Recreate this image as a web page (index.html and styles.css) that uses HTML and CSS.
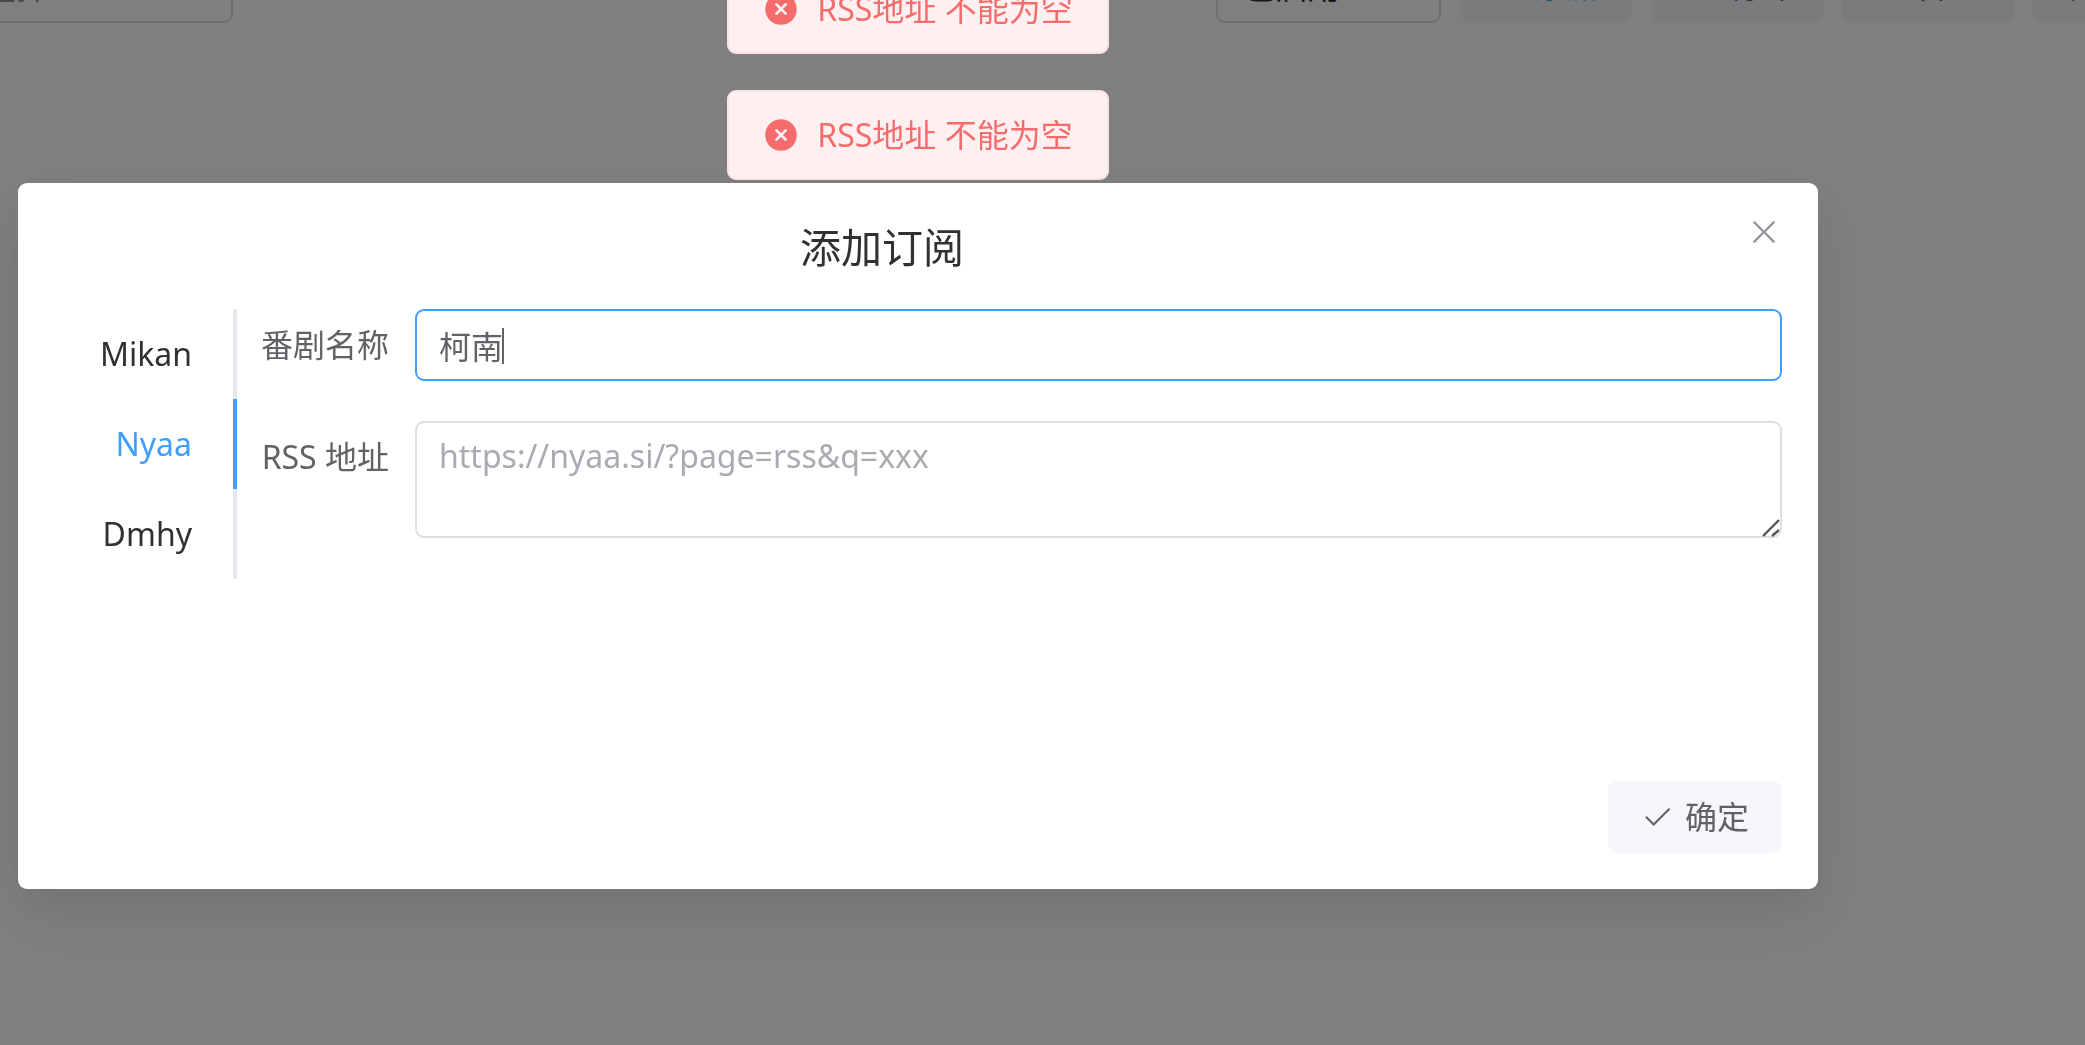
FILE: index.html
```html
<!DOCTYPE html>
<html lang="zh-CN">
<head>
<meta charset="utf-8">
<meta name="viewport" content="width=device-width, initial-scale=1">
<title>添加订阅</title>
<link rel="stylesheet" href="styles.css">
</head>
<body>
<div class="toolbar">
  <input class="toolbar-search" type="text" placeholder="请选择" aria-label="搜索">
  <div class="toolbar-actions">
    <select class="toolbar-filter" aria-label="状态"><option>已启用</option></select>
    <button class="btn btn-tool btn-primary" type="button"><span class="btn-icon"></span>添加</button>
    <button class="btn btn-tool" type="button"><span class="btn-icon"></span>刷新</button>
    <button class="btn btn-tool" type="button"><span class="btn-icon"></span>管理</button>
    <button class="btn btn-tool" type="button">日志</button>
  </div>
</div>

<div class="overlay">
  <section class="dialog" role="dialog" aria-labelledby="dialog-title">
    <header class="dialog-header">
      <h1 class="dialog-title" id="dialog-title">添加订阅</h1>
      <button class="dialog-close" type="button" aria-label="关闭">
        <svg viewBox="0 0 1024 1024" width="36" height="36"><path fill="currentColor" d="M764.288 214.592 512 466.88 259.712 214.592a31.936 31.936 0 0 0-45.12 45.12L466.752 512 214.528 764.224a31.936 31.936 0 1 0 45.12 45.184L512 557.184l252.288 252.288a31.936 31.936 0 0 0 45.12-45.12L557.12 512.064l252.288-252.352a31.936 31.936 0 1 0-45.12-45.184z"/></svg>
      </button>
    </header>
    <div class="dialog-body">
      <nav class="tabs">
        <a class="tab" href="#mikan">Mikan</a>
        <a class="tab active" href="#nyaa">Nyaa</a>
        <a class="tab" href="#dmhy">Dmhy</a>
      </nav>
      <form class="form" id="subscribe">
        <div class="form-item">
          <label class="form-label" for="name">番剧名称</label>
          <div class="field">
            <input class="control control-active" id="name" type="text" value="柯南">
            <span class="caret"></span>
          </div>
        </div>
        <div class="form-item">
          <label class="form-label" for="rss">RSS 地址</label>
          <div class="field">
            <textarea class="control control-area" id="rss" placeholder="https://nyaa.si/?page=rss&amp;q=xxx"></textarea>
            <svg class="grip" viewBox="0 0 20 20" width="20" height="20"><path d="M1 18 17 2M10 18l7-6" fill="none" stroke="#555" stroke-width="2.4"/></svg>
          </div>
        </div>
      </form>
    </div>
    <footer class="dialog-footer">
      <button class="btn" type="submit" form="subscribe">
        <svg viewBox="0 0 1024 1024" width="32" height="32"><path fill="currentColor" d="M406.656 706.944 195.84 496.256a32 32 0 1 0-45.248 45.248l256 256 512-512a32 32 0 0 0-45.248-45.248L406.592 706.944z"/></svg>
        确定
      </button>
    </footer>
  </section>
</div>

<div class="messages">
  <div class="message" role="alert">
    <svg viewBox="0 0 1024 1024" width="36" height="36"><path fill="currentColor" d="M512 64a448 448 0 1 1 0 896 448 448 0 0 1 0-896m0 393.664L407.936 353.6a38.4 38.4 0 1 0-54.336 54.336L457.664 512 353.6 616.064a38.4 38.4 0 1 0 54.336 54.336L512 566.336 616.064 670.4a38.4 38.4 0 1 0 54.336-54.336L566.336 512 670.4 407.936a38.4 38.4 0 1 0-54.336-54.336z"/></svg>
    <p class="message-text">RSS地址 不能为空</p>
  </div>
  <div class="message" role="alert">
    <svg viewBox="0 0 1024 1024" width="36" height="36"><path fill="currentColor" d="M512 64a448 448 0 1 1 0 896 448 448 0 0 1 0-896m0 393.664L407.936 353.6a38.4 38.4 0 1 0-54.336 54.336L457.664 512 353.6 616.064a38.4 38.4 0 1 0 54.336 54.336L512 566.336 616.064 670.4a38.4 38.4 0 1 0 54.336-54.336L566.336 512 670.4 407.936a38.4 38.4 0 1 0-54.336-54.336z"/></svg>
    <p class="message-text">RSS地址 不能为空</p>
  </div>
</div>
</body>
</html>
```
FILE: styles.css
```css
* { box-sizing: border-box; }

body {
  margin: 0;
  min-height: 100vh;
  overflow: hidden;
  background: #fff;
  color: #303133;
  font: 32px/36px "Noto Sans", "Noto Sans CJK SC", sans-serif;
}

button, input, select, textarea { font: inherit; }

/* Page toolbar, scrolled partly out of view */
.toolbar {
  display: flex;
  justify-content: space-between;
  margin-top: -50px;
  overflow: hidden;
}

.toolbar-search,
.toolbar-filter {
  height: 73px;
  padding: 0 26px;
  border: 2px solid #dcdfe6;
  border-radius: 9px;
  background: #fff;
  color: #303133;
  appearance: none;
}

.toolbar-search {
  width: 309px;
  margin-left: -76px;
}

.toolbar-search::placeholder { color: #909399; }

.toolbar-filter { width: 225px; }

.toolbar-actions {
  display: flex;
  flex: none;
  gap: 19px;
  margin-right: -120px;
}

.btn {
  display: flex;
  align-items: center;
  gap: 12px;
  height: 72px;
  padding: 0 33px;
  border: 0;
  border-radius: 9px;
  background: #f5f7fa;
  color: #606266;
}

.btn-tool { width: 172px; }
.btn-icon { width: 28px; }
.btn-primary { color: #409eff; }

/* Modal */
.overlay {
  position: fixed;
  inset: 0;
  padding: 183px 267px 0 18px;
  background: rgba(0, 0, 0, .5);
}

.dialog {
  display: flex;
  flex-direction: column;
  min-height: 706px;
  padding: 36px;
  border-radius: 9px;
  background: #fff;
  box-shadow: 0 27px 72px 9px rgba(0, 0, 0, .04), 0 18px 45px rgba(0, 0, 0, .08);
}

.dialog-header {
  position: relative;
  padding: 0 72px 34px 0;
}

.dialog-title {
  margin: 0;
  font-size: 41px;
  font-weight: 400;
  line-height: 56px;
  text-align: center;
}

.dialog-close {
  position: absolute;
  top: -5px;
  right: 0;
  display: flex;
  padding: 0;
  border: 0;
  background: none;
  color: #909399;
}

.dialog-body {
  display: flex;
  flex: 1;
  align-items: flex-start;
}

.tabs {
  width: 183px;
  flex: none;
}

.tab {
  display: block;
  padding-right: 41px;
  border-right: 4px solid #e4e7ed;
  color: #303133;
  line-height: 90px;
  text-align: right;
  text-decoration: none;
}

.tab.active {
  border-color: #409eff;
  color: #409eff;
}

.form {
  display: grid;
  flex: 1;
  gap: 40px;
}

.form-item { display: flex; }

.form-label {
  flex: none;
  width: 178px;
  padding-right: 26px;
  color: #606266;
  line-height: 72px;
  text-align: right;
}

.field {
  position: relative;
  display: flex;
  flex: 1;
}

.control {
  width: 100%;
  height: 72px;
  padding: 0 22px;
  border: 2px solid #dcdfe6;
  border-radius: 9px;
  outline: 0;
  background: #fff;
  color: #606266;
}

.control-active { border-color: #409eff; }

.control-area {
  height: 117px;
  padding: 9px 22px;
  line-height: 47px;
  resize: none;
}

.control-area::placeholder { color: #a8abb2; }

.caret {
  position: absolute;
  top: 19px;
  left: 87px;
  width: 2px;
  height: 36px;
  background: #606266;
}

.grip {
  position: absolute;
  right: 0;
  bottom: 0;
}

.dialog-footer {
  display: flex;
  justify-content: flex-end;
}

/* Toasts */
.messages {
  position: fixed;
  top: -36px;
  left: 0;
  right: 249px;
  display: grid;
  justify-content: center;
  gap: 36px;
}

.message {
  display: flex;
  align-items: center;
  gap: 18px;
  height: 90px;
  padding: 0 34px;
  border: 2px solid #fde2e2;
  border-radius: 9px;
  background: #fef0f0;
  color: #f56c6c;
}

.message-text { margin: 0; }
```
